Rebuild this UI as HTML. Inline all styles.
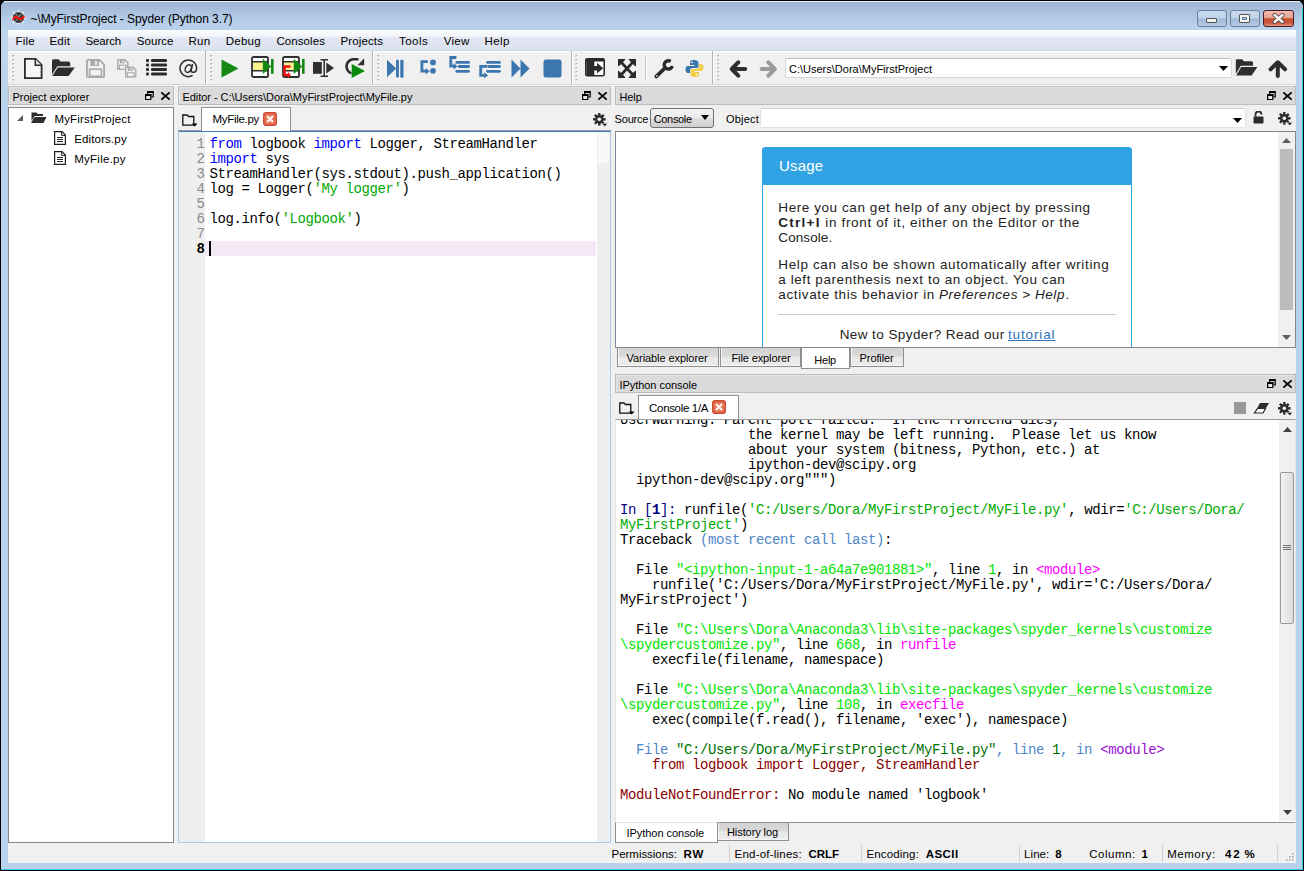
<!DOCTYPE html><html><head><meta charset="utf-8"><style>html,body{margin:0;padding:0;}body{width:1304px;height:871px;overflow:hidden;position:relative;background:#000;font-family:"Liberation Sans",sans-serif;}.a{position:absolute;}.t{position:absolute;white-space:pre;line-height:1;}</style></head><body>
<div class="a" style="left:1px;top:1px;width:1302px;height:869px;background:#b9d1ea;border-radius:6px 6px 0 0;"></div>
<div class="a" style="left:1px;top:1px;width:1302px;height:29px;background:linear-gradient(#9ab3d2,#b3cbe6 60%,#bcd3ec);border-radius:6px 6px 0 0;"></div>
<div class="a" style="left:4px;top:1px;width:1296px;height:1px;background:#eef4fa;"></div>
<div class="a" style="left:1px;top:30px;width:7px;height:90px;background:linear-gradient(#bfd5ec,#b9d1ea);"></div>
<div class="a" style="left:1296px;top:30px;width:7px;height:90px;background:linear-gradient(#bfd5ec,#b9d1ea);"></div>
<div class="a" style="left:1302px;top:8px;width:1px;height:862px;background:#36c8e8;"></div>
<div class="a" style="left:1px;top:869px;width:1302px;height:1px;background:#36c8e8;"></div>
<svg class="a" style="left:10px;top:9px;" width="17" height="17" viewBox="0 0 17 17"><polygon points="8.50,0.50 10.64,3.33 14.16,2.84 13.67,6.36 16.50,8.50 13.67,10.64 14.16,14.16 10.64,13.67 8.50,16.50 6.36,13.67 2.84,14.16 3.33,10.64 0.50,8.50 3.33,6.36 2.84,2.84 6.36,3.33" fill="#eef3f9" opacity="0.85"/><circle cx="8.5" cy="8.5" r="5.6" fill="#3a3a3a"/><path d="M5 4.5 L8.5 8 L12 4.5 M5 12.5 L8.5 9 L12 12.5" stroke="#cfcfcf" stroke-width="0.8" fill="none"/><path d="M3.2 10 Q5.5 6.5 8 9 T13.8 8" stroke="#ff1010" stroke-width="2.2" fill="none" stroke-linecap="round"/></svg>
<div class="t" style="left:30.50px;top:12.84px;font-size:12px;color:#000;letter-spacing:-0.063px;">~\MyFirstProject - Spyder (Python 3.7)</div>
<div class="a" style="left:1197px;top:10px;width:30px;height:17px;box-sizing:border-box;border:1px solid #6d7f96;border-radius:3px;background:linear-gradient(#c9daee,#bfd3ea 45%,#9fb8d6 55%,#b7cde6);"></div>
<div class="a" style="left:1206px;top:18px;width:11px;height:5px;box-sizing:border-box;border:1px solid #555;background:#f4f4f4;border-radius:1px;"></div>
<div class="a" style="left:1230px;top:10px;width:30px;height:17px;box-sizing:border-box;border:1px solid #6d7f96;border-radius:3px;background:linear-gradient(#c9daee,#bfd3ea 45%,#9fb8d6 55%,#b7cde6);"></div>
<div class="a" style="left:1239px;top:14px;width:11px;height:9px;box-sizing:border-box;border:1px solid #555;background:#f4f4f4;border-radius:1px;"></div>
<div class="a" style="left:1242px;top:17px;width:5px;height:3px;box-sizing:border-box;border:1px solid #6d7f96;background:#aac3de;"></div>
<div class="a" style="left:1263px;top:10px;width:31px;height:17px;box-sizing:border-box;border:1px solid #4a1a20;border-radius:3px;background:linear-gradient(#f2bcae,#e3a292 45%,#c9502f 52%,#c8583f 80%,#e49a80);"></div>
<svg class="a" style="left:1272px;top:13px;" width="13" height="11" viewBox="0 0 13 11"><path d="M2.5 2 L10.5 9 M10.5 2 L2.5 9" stroke="#4a3838" stroke-width="4" stroke-linecap="round"/><path d="M2.5 2 L10.5 9 M10.5 2 L2.5 9" stroke="#fafafa" stroke-width="2.4" stroke-linecap="round"/></svg>
<div class="a" style="left:8px;top:30px;width:1288px;height:833px;background:#f0f0f0;"></div>
<div class="a" style="left:8px;top:30px;width:1288px;height:21px;background:linear-gradient(#fcfdfe 0,#f2f4f9 30%,#e3e7f3 36%,#dfe4f1 60%,#dbe1ef 100%);"></div>
<div class="a" style="left:8px;top:50px;width:1288px;height:1px;background:#cdd4e2;"></div>
<div class="t" style="left:15.50px;top:35.87px;font-size:11.5px;color:#000;letter-spacing:0.192px;">File</div>
<div class="t" style="left:49.40px;top:35.87px;font-size:11.5px;color:#000;letter-spacing:0.271px;">Edit</div>
<div class="t" style="left:85.60px;top:35.87px;font-size:11.5px;color:#000;letter-spacing:-0.156px;">Search</div>
<div class="t" style="left:136.70px;top:35.87px;font-size:11.5px;color:#000;letter-spacing:0.077px;">Source</div>
<div class="t" style="left:188.50px;top:35.87px;font-size:11.5px;color:#000;letter-spacing:0.234px;">Run</div>
<div class="t" style="left:225.80px;top:35.87px;font-size:11.5px;color:#000;letter-spacing:0.222px;">Debug</div>
<div class="t" style="left:276.40px;top:35.87px;font-size:11.5px;color:#000;letter-spacing:0.082px;">Consoles</div>
<div class="t" style="left:340.60px;top:35.87px;font-size:11.5px;color:#000;letter-spacing:0.107px;">Projects</div>
<div class="t" style="left:399.00px;top:35.87px;font-size:11.5px;color:#000;letter-spacing:0.451px;">Tools</div>
<div class="t" style="left:443.70px;top:35.87px;font-size:11.5px;color:#000;letter-spacing:0.270px;">View</div>
<div class="t" style="left:484.50px;top:35.87px;font-size:11.5px;color:#000;letter-spacing:0.387px;">Help</div>
<div class="a" style="left:8px;top:51px;width:1288px;height:33px;background:#f0f0f0;"></div>
<div class="a" style="left:8px;top:51px;width:1288px;height:1px;background:#fdfdfd;"></div>
<div class="a" style="left:8px;top:84px;width:1288px;height:1px;background:#d4d4d4;"></div>
<div class="a" style="left:8px;top:85px;width:1288px;height:1px;background:#fbfbfb;"></div>
<div class="a" style="left:205px;top:51px;width:1px;height:33px;background:#b4b4b4;"></div>
<div class="a" style="left:206px;top:51px;width:1px;height:33px;background:#fdfdfd;"></div>
<div class="a" style="left:372px;top:51px;width:1px;height:33px;background:#b4b4b4;"></div>
<div class="a" style="left:373px;top:51px;width:1px;height:33px;background:#fdfdfd;"></div>
<div class="a" style="left:571px;top:51px;width:1px;height:33px;background:#b4b4b4;"></div>
<div class="a" style="left:572px;top:51px;width:1px;height:33px;background:#fdfdfd;"></div>
<div class="a" style="left:712px;top:51px;width:1px;height:33px;background:#b4b4b4;"></div>
<div class="a" style="left:713px;top:51px;width:1px;height:33px;background:#fdfdfd;"></div>
<svg class="a" style="left:11.5px;top:55px;" width="3" height="27" viewBox="0 0 3 27"><rect x="0.5" y="0" width="1.5" height="1.5" fill="#a8a8a8"/><rect x="1.5" y="1.5" width="1" height="1" fill="#fff"/><rect x="0.5" y="4" width="1.5" height="1.5" fill="#a8a8a8"/><rect x="1.5" y="5.5" width="1" height="1" fill="#fff"/><rect x="0.5" y="8" width="1.5" height="1.5" fill="#a8a8a8"/><rect x="1.5" y="9.5" width="1" height="1" fill="#fff"/><rect x="0.5" y="12" width="1.5" height="1.5" fill="#a8a8a8"/><rect x="1.5" y="13.5" width="1" height="1" fill="#fff"/><rect x="0.5" y="16" width="1.5" height="1.5" fill="#a8a8a8"/><rect x="1.5" y="17.5" width="1" height="1" fill="#fff"/><rect x="0.5" y="20" width="1.5" height="1.5" fill="#a8a8a8"/><rect x="1.5" y="21.5" width="1" height="1" fill="#fff"/><rect x="0.5" y="24" width="1.5" height="1.5" fill="#a8a8a8"/><rect x="1.5" y="25.5" width="1" height="1" fill="#fff"/></svg>
<svg class="a" style="left:210px;top:55px;" width="3" height="27" viewBox="0 0 3 27"><rect x="0.5" y="0" width="1.5" height="1.5" fill="#a8a8a8"/><rect x="1.5" y="1.5" width="1" height="1" fill="#fff"/><rect x="0.5" y="4" width="1.5" height="1.5" fill="#a8a8a8"/><rect x="1.5" y="5.5" width="1" height="1" fill="#fff"/><rect x="0.5" y="8" width="1.5" height="1.5" fill="#a8a8a8"/><rect x="1.5" y="9.5" width="1" height="1" fill="#fff"/><rect x="0.5" y="12" width="1.5" height="1.5" fill="#a8a8a8"/><rect x="1.5" y="13.5" width="1" height="1" fill="#fff"/><rect x="0.5" y="16" width="1.5" height="1.5" fill="#a8a8a8"/><rect x="1.5" y="17.5" width="1" height="1" fill="#fff"/><rect x="0.5" y="20" width="1.5" height="1.5" fill="#a8a8a8"/><rect x="1.5" y="21.5" width="1" height="1" fill="#fff"/><rect x="0.5" y="24" width="1.5" height="1.5" fill="#a8a8a8"/><rect x="1.5" y="25.5" width="1" height="1" fill="#fff"/></svg>
<svg class="a" style="left:376.5px;top:55px;" width="3" height="27" viewBox="0 0 3 27"><rect x="0.5" y="0" width="1.5" height="1.5" fill="#a8a8a8"/><rect x="1.5" y="1.5" width="1" height="1" fill="#fff"/><rect x="0.5" y="4" width="1.5" height="1.5" fill="#a8a8a8"/><rect x="1.5" y="5.5" width="1" height="1" fill="#fff"/><rect x="0.5" y="8" width="1.5" height="1.5" fill="#a8a8a8"/><rect x="1.5" y="9.5" width="1" height="1" fill="#fff"/><rect x="0.5" y="12" width="1.5" height="1.5" fill="#a8a8a8"/><rect x="1.5" y="13.5" width="1" height="1" fill="#fff"/><rect x="0.5" y="16" width="1.5" height="1.5" fill="#a8a8a8"/><rect x="1.5" y="17.5" width="1" height="1" fill="#fff"/><rect x="0.5" y="20" width="1.5" height="1.5" fill="#a8a8a8"/><rect x="1.5" y="21.5" width="1" height="1" fill="#fff"/><rect x="0.5" y="24" width="1.5" height="1.5" fill="#a8a8a8"/><rect x="1.5" y="25.5" width="1" height="1" fill="#fff"/></svg>
<svg class="a" style="left:575px;top:55px;" width="3" height="27" viewBox="0 0 3 27"><rect x="0.5" y="0" width="1.5" height="1.5" fill="#a8a8a8"/><rect x="1.5" y="1.5" width="1" height="1" fill="#fff"/><rect x="0.5" y="4" width="1.5" height="1.5" fill="#a8a8a8"/><rect x="1.5" y="5.5" width="1" height="1" fill="#fff"/><rect x="0.5" y="8" width="1.5" height="1.5" fill="#a8a8a8"/><rect x="1.5" y="9.5" width="1" height="1" fill="#fff"/><rect x="0.5" y="12" width="1.5" height="1.5" fill="#a8a8a8"/><rect x="1.5" y="13.5" width="1" height="1" fill="#fff"/><rect x="0.5" y="16" width="1.5" height="1.5" fill="#a8a8a8"/><rect x="1.5" y="17.5" width="1" height="1" fill="#fff"/><rect x="0.5" y="20" width="1.5" height="1.5" fill="#a8a8a8"/><rect x="1.5" y="21.5" width="1" height="1" fill="#fff"/><rect x="0.5" y="24" width="1.5" height="1.5" fill="#a8a8a8"/><rect x="1.5" y="25.5" width="1" height="1" fill="#fff"/></svg>
<svg class="a" style="left:717px;top:55px;" width="3" height="27" viewBox="0 0 3 27"><rect x="0.5" y="0" width="1.5" height="1.5" fill="#a8a8a8"/><rect x="1.5" y="1.5" width="1" height="1" fill="#fff"/><rect x="0.5" y="4" width="1.5" height="1.5" fill="#a8a8a8"/><rect x="1.5" y="5.5" width="1" height="1" fill="#fff"/><rect x="0.5" y="8" width="1.5" height="1.5" fill="#a8a8a8"/><rect x="1.5" y="9.5" width="1" height="1" fill="#fff"/><rect x="0.5" y="12" width="1.5" height="1.5" fill="#a8a8a8"/><rect x="1.5" y="13.5" width="1" height="1" fill="#fff"/><rect x="0.5" y="16" width="1.5" height="1.5" fill="#a8a8a8"/><rect x="1.5" y="17.5" width="1" height="1" fill="#fff"/><rect x="0.5" y="20" width="1.5" height="1.5" fill="#a8a8a8"/><rect x="1.5" y="21.5" width="1" height="1" fill="#fff"/><rect x="0.5" y="24" width="1.5" height="1.5" fill="#a8a8a8"/><rect x="1.5" y="25.5" width="1" height="1" fill="#fff"/></svg>
<svg class="a" style="left:24px;top:58px;" width="19" height="21" viewBox="0 0 19 21"><path d="M0.9 0.9 H11.6 L17.6 6.9 V20.1 H0.9 Z" fill="#f6f6f6" stroke="#2b2b2b" stroke-width="1.8" stroke-linejoin="miter"/><path d="M11.3 1 V7.2 H17.5" fill="#e2e2e2" stroke="#2b2b2b" stroke-width="1.5"/></svg>
<svg class="a" style="left:51px;top:59px;" width="24" height="19" viewBox="0 0 24 19"><path d="M1 1.8 Q1 0.3 2.5 0.3 H7 Q8.5 0.3 9.3 2.6 H17.5 Q19.2 2.6 19.2 4.3 V7.2 H6.3 L1 15.5 Z" fill="#2e2e2e"/><path d="M6.6 8.6 H23.8 L17.6 17 H1.3 Z" fill="#2e2e2e"/></svg>
<svg class="a" style="left:86px;top:59px;" width="19" height="19" viewBox="0 0 19 19"><path d="M1.7 0.9 H13.5 L18.1 5.5 V17.1 Q18.1 18.1 17.1 18.1 H1.9 Q0.9 18.1 0.9 17.1 V1.9 Q0.9 0.9 1.9 0.9 Z" fill="#efefef" stroke="#a9a9a9" stroke-width="1.8"/><rect x="4.5" y="1" width="8.5" height="5.8" fill="#a9a9a9"/><rect x="8.8" y="2" width="2.4" height="3.8" fill="#e8e8e8"/><rect x="3.6" y="10.2" width="11.8" height="7" fill="#f2f2f2" stroke="#a9a9a9" stroke-width="1.6"/></svg>
<svg class="a" style="left:117px;top:59px;" width="20" height="19" viewBox="0 0 20 19"><g><path d="M1.2 0.7 H8 L10.8 3.5 V10.3 H0.7 V1.2 Z" fill="#efefef" stroke="#aaa" stroke-width="1.4"/><rect x="2.8" y="0.8" width="5" height="3.5" fill="#aaa"/><rect x="5.4" y="1.4" width="1.4" height="2.2" fill="#e8e8e8"/><rect x="2.4" y="6.2" width="6.6" height="4" fill="#f2f2f2" stroke="#aaa" stroke-width="1.1"/></g><g transform="translate(8,7.5)"><path d="M1.2 0.7 H8 L10.8 3.5 V10.3 H0.7 V1.2 Z" fill="#efefef" stroke="#aaa" stroke-width="1.4"/><rect x="2.8" y="0.8" width="5" height="3.5" fill="#aaa"/><rect x="5.4" y="1.4" width="1.4" height="2.2" fill="#e8e8e8"/><rect x="2.4" y="6.2" width="6.6" height="4" fill="#f2f2f2" stroke="#aaa" stroke-width="1.1"/></g></svg>
<svg class="a" style="left:146px;top:59px;" width="22" height="17" viewBox="0 0 22 17"><rect x="0" y="0" width="3" height="3" rx="1" fill="#2b2b2b"/><rect x="5" y="0" width="16" height="3" rx="1.2" fill="#2b2b2b"/><rect x="0" y="4.5" width="3" height="3" rx="1" fill="#2b2b2b"/><rect x="5" y="4.5" width="16" height="3" rx="1.2" fill="#2b2b2b"/><rect x="0" y="9" width="3" height="3" rx="1" fill="#2b2b2b"/><rect x="5" y="9" width="16" height="3" rx="1.2" fill="#2b2b2b"/><rect x="0" y="13.5" width="3" height="3" rx="1" fill="#2b2b2b"/><rect x="5" y="13.5" width="16" height="3" rx="1.2" fill="#2b2b2b"/></svg>
<svg class="a" style="left:179px;top:59px;" width="19" height="19" viewBox="0 0 19 19"><ellipse cx="9.3" cy="9.6" rx="2.9" ry="4" transform="rotate(28 9.3 9.6)" fill="none" stroke="#2b2b2b" stroke-width="1.5"/><path d="M13.5 4.8 L12.2 11.4 Q12 13.4 14.4 13.3 Q17.6 13.3 17.6 9 A8.3 8.3 0 1 0 13.6 16.4" fill="none" stroke="#2b2b2b" stroke-width="1.5"/></svg>
<svg class="a" style="left:221px;top:59px;" width="18" height="19" viewBox="0 0 18 19"><path d="M0.5 0.5 L17.5 9.5 L0.5 18.5 Z" fill="#148a14"/></svg>
<svg class="a" style="left:251px;top:56px;" width="24" height="23" viewBox="0 0 24 23"><rect x="1" y="1" width="16" height="20" rx="1.6" fill="#fff" stroke="#2f2f2f" stroke-width="1.8"/><rect x="2" y="6" width="14" height="8.5" fill="#f9f18e"/><path d="M1 5.8 H17 M1 14.7 H17" stroke="#2f2f2f" stroke-width="1.4"/><path d="M11.8 2.8 L20.2 10.4 L11.8 18 Z" fill="#118811"/><rect x="20" y="2.9" width="2.6" height="14.9" fill="#118811"/></svg>
<svg class="a" style="left:282px;top:56px;" width="24" height="23" viewBox="0 0 24 23"><rect x="1" y="1" width="16" height="20" rx="1.6" fill="#fff" stroke="#2f2f2f" stroke-width="1.8"/><rect x="2" y="6" width="14" height="8.5" fill="#f9f18e"/><path d="M1 5.8 H17 M1 14.7 H17" stroke="#2f2f2f" stroke-width="1.4"/><path d="M11.8 2.8 L20.2 10.4 L11.8 18 Z" fill="#118811"/><rect x="20" y="2.9" width="2.6" height="14.9" fill="#118811"/><path d="M8.5 10.5 H2.5 V19 H6.5" stroke="#f01010" stroke-width="2.5" fill="none"/><path d="M6 16 L9 19.2 L6 22 Z" fill="#f01010"/></svg>
<svg class="a" style="left:313px;top:59px;" width="22" height="19" viewBox="0 0 22 19"><rect x="0" y="3" width="8.8" height="11.8" fill="#2f2f2f"/><path d="M7.5 0.8 H15 M11.2 0.8 V17.2 M7.5 17.2 H15" stroke="#2f2f2f" stroke-width="1.5"/><path d="M13.3 3.4 L21 9 L13.3 14.6 Z" fill="#2f2f2f"/></svg>
<svg class="a" style="left:345px;top:58px;" width="21" height="21" viewBox="0 0 21 21"><path d="M13.5 1.3 H9.5 A7.2 7.2 0 0 0 6.5 15.3" stroke="#2f2f2f" stroke-width="2.6" fill="none"/><path d="M12.5 7.2 L19.2 7.2 L19.2 0.3 Z" fill="#2f2f2f"/><path d="M6.7 6 L20 13 L6.7 20 Z" fill="#0a8a0a"/></svg>
<svg class="a" style="left:386px;top:59px;" width="18" height="20" viewBox="0 0 18 20"><path d="M1 0.8 L10.2 9.5 L1 18.2 Z" fill="#3b76ae"/><path d="M11.45 0.2 L12.9 1.6 V17.6 L11.45 19 L10 17.6 V1.6 Z" fill="#3b76ae"/><rect x="14.3" y="0.8" width="3.2" height="18" rx="1" fill="#3b76ae"/></svg>
<svg class="a" style="left:420px;top:59px;" width="17" height="17" viewBox="0 0 17 17"><path d="M7.8 2.6 H1.9 V12.2 H6" stroke="#3b76ae" stroke-width="2.8" fill="none"/><path d="M5.6 9 L9.6 12.2 L5.6 15.4 Z" fill="#3b76ae"/><circle cx="13" cy="3.4" r="2.9" fill="#3b76ae"/><circle cx="13" cy="11.8" r="2.9" fill="#3b76ae"/></svg>
<svg class="a" style="left:449px;top:56px;" width="22" height="18" viewBox="0 0 22 18"><path d="M7.4 1.5 H1.8 V10.2 H5" stroke="#3b76ae" stroke-width="2.8" fill="none"/><path d="M4.8 7 L8.4 10.2 L4.8 13.4 Z" fill="#3b76ae"/><rect x="6.4" y="5" width="14.6" height="2.8" rx="1.4" fill="#3b76ae"/><rect x="8.6" y="9.1" width="12.4" height="2.8" rx="1.4" fill="#3b76ae"/><rect x="6.4" y="13.9" width="14.6" height="2.8" rx="1.4" fill="#3b76ae"/></svg>
<svg class="a" style="left:479px;top:61px;" width="23" height="18" viewBox="0 0 23 18"><rect x="7.1" y="0" width="14.8" height="2.8" rx="1.4" fill="#3b76ae"/><rect x="8.6" y="4.1" width="13.3" height="2.8" rx="1.4" fill="#3b76ae"/><rect x="7.1" y="8.9" width="14.8" height="2.8" rx="1.4" fill="#3b76ae"/><path d="M8.4 5.4 H1.7 V14.4 H5.5" stroke="#3b76ae" stroke-width="2.8" fill="none"/><path d="M5.2 11.2 L9 14.4 L5.2 17.6 Z" fill="#3b76ae"/></svg>
<svg class="a" style="left:511px;top:59px;" width="20" height="19" viewBox="0 0 20 19"><path d="M0.5 0.5 L9.5 9.5 L0.5 18.5 Z M9.5 0.5 L18.5 9.5 L9.5 18.5 Z" fill="#3b76ae"/></svg>
<svg class="a" style="left:543px;top:59px;" width="19" height="19" viewBox="0 0 19 19"><rect x="0.5" y="0.5" width="18" height="18" rx="2.5" fill="#3b76ae"/></svg>
<svg class="a" style="left:585px;top:58px;" width="20" height="19" viewBox="0 0 20 19"><rect x="0.8" y="0.8" width="18.4" height="17" rx="1.6" fill="#fff" stroke="#2b2b2b" stroke-width="1.6"/><rect x="0.5" y="0.5" width="19" height="3" rx="1" fill="#2b2b2b"/><rect x="1.5" y="3" width="7.8" height="14" fill="#2b2b2b"/><rect x="8" y="8" width="5" height="4.5" fill="#2b2b2b"/><path d="M12 4.8 L18.2 10.2 L12 15.6 Z" fill="#2b2b2b"/></svg>
<svg class="a" style="left:618px;top:59px;" width="18" height="19" viewBox="0 0 18 19"><path d="M2.5 2.5 L15.5 16.5 M15.5 2.5 L2.5 16.5" stroke="#2b2b2b" stroke-width="2.7"/><path d="M0.6 0.6 H6.6 L4.4 2.9 L2.9 4.4 L0.6 6.6 Z" fill="#2b2b2b" stroke="#2b2b2b" stroke-width="1.2" stroke-linejoin="round"/><g transform="translate(18,0) scale(-1,1)"><path d="M0.6 0.6 H6.6 L4.4 2.9 L2.9 4.4 L0.6 6.6 Z" fill="#2b2b2b" stroke="#2b2b2b" stroke-width="1.2" stroke-linejoin="round"/></g><g transform="translate(0,19) scale(1,-1)"><path d="M0.6 0.6 H6.6 L4.4 2.9 L2.9 4.4 L0.6 6.6 Z" fill="#2b2b2b" stroke="#2b2b2b" stroke-width="1.2" stroke-linejoin="round"/></g><g transform="translate(18,19) scale(-1,-1)"><path d="M0.6 0.6 H6.6 L4.4 2.9 L2.9 4.4 L0.6 6.6 Z" fill="#2b2b2b" stroke="#2b2b2b" stroke-width="1.2" stroke-linejoin="round"/></g></svg>
<div class="a" style="left:645px;top:56px;width:1px;height:24px;background:#c9c9c9;"></div>
<div class="a" style="left:646px;top:56px;width:1px;height:24px;background:#fdfdfd;"></div>
<svg class="a" style="left:654px;top:59px;" width="20" height="20" viewBox="0 0 20 20"><path d="M2.4 17.4 L11 9" stroke="#2b2b2b" stroke-width="3.8" stroke-linecap="round"/><circle cx="2.9" cy="16.9" r="0.8" fill="#f0f0f0"/><path d="M16.6 2.5 A4.1 4.1 0 1 0 18.3 7.1" stroke="#2b2b2b" stroke-width="3.4" fill="none"/></svg>
<svg class="a" style="left:685px;top:59px;" width="19" height="19" viewBox="0 0 19 19"><path d="M9 1 C5 1 5 2.5 5 4 V6 H9.5 V7 H3 C1 7 0.5 9 0.5 10.5 C0.5 12 1 14 3 14 H5 V11.5 C5 10 6 9 7.5 9 H11.5 C13 9 13.5 8 13.5 6.5 V4 C13.5 2 12 1 9 1 Z" fill="#3b77a8"/><path d="M10 18 C14 18 14 16.5 14 15 V13 H9.5 V12 H16 C18 12 18.5 10 18.5 8.5 C18.5 7 18 5 16 5 H14 V7.5 C14 9 13 10 11.5 10 H7.5 C6 10 5.5 11 5.5 12.5 V15 C5.5 17 7 18 10 18 Z" fill="#f2cd4a"/><circle cx="7" cy="3.3" r="0.9" fill="#fff"/><circle cx="12" cy="15.7" r="0.9" fill="#fff"/></svg>
<svg class="a" style="left:729px;top:60px;" width="20" height="18" viewBox="0 0 20 18"><path d="M9.2 2.3 L2.8 9 L9.2 15.7 M3.5 9 H16.2" stroke="#2e2e2e" stroke-width="4" fill="none" stroke-linecap="round" stroke-linejoin="round"/></svg>
<svg class="a" style="left:759px;top:60px;" width="20" height="18" viewBox="0 0 20 18"><path d="M9.4 2.3 L15.8 9 L9.4 15.7 M15 9 H2.6" stroke="#9a9a9a" stroke-width="4" fill="none" stroke-linecap="round" stroke-linejoin="round"/></svg>
<svg class="a" style="left:1235px;top:59px;" width="23" height="18" viewBox="0 0 23 18"><path d="M0.8 1.5 Q0.8 0.2 2.2 0.2 H6.5 Q7.9 0.2 8.7 2.3 H16.5 Q18 2.3 18 3.8 V6.8 H5.8 L0.8 14.8 Z" fill="#2e2e2e"/><path d="M6.2 8.1 H22.4 L16.6 16.6 H1.1 Z" fill="#2e2e2e"/></svg>
<svg class="a" style="left:1268px;top:60px;" width="20" height="18" viewBox="0 0 20 18"><path d="M2.6 9.3 L9.8 2.3 L17 9.3 M9.8 3 V16" stroke="#2e2e2e" stroke-width="4" fill="none" stroke-linecap="round" stroke-linejoin="round"/></svg>
<div class="a" style="left:785px;top:58px;width:447px;height:20px;box-sizing:border-box;border:1px solid #d6d6d6;border-top-color:#c2c2c2;background:#fff;border-radius:2px;"></div>
<div class="t" style="left:789.00px;top:63.69px;font-size:11px;color:#000;letter-spacing:-0.001px;">C:\Users\Dora\MyFirstProject</div>
<svg class="a" style="left:1219px;top:66px;" width="9" height="5" viewBox="0 0 9 5"><path d="M0 0 H9 L4.5 5 Z" fill="#000"/></svg>
<div class="a" style="left:8px;top:86px;width:166px;height:19px;box-sizing:border-box;border:1px solid #bcbcbc;background:#dadada;box-shadow:inset 1px 1px 0 #e4e4e4;"></div>
<div class="t" style="left:12.40px;top:91.69px;font-size:11px;color:#000;letter-spacing:-0.002px;">Project explorer</div>
<svg class="a" style="left:145px;top:91px;" width="9" height="9" viewBox="0 0 9 9"><path d="M2.6 0.8 H8.2 V6 H5.5 M2.6 0.8 V3" stroke="#000" stroke-width="1.2" fill="none"/><rect x="2" y="0" width="6.6" height="2" fill="#000"/><rect x="0.6" y="3.6" width="5.2" height="5" fill="#e6e6e6" stroke="#000" stroke-width="1.2"/><rect x="0" y="3" width="6.4" height="2" fill="#000"/></svg>
<svg class="a" style="left:161px;top:92px;" width="9" height="8" viewBox="0 0 9 8"><path d="M0.9 0.9 L8.1 7.1 M8.1 0.9 L0.9 7.1" stroke="#000" stroke-width="1.8" stroke-linecap="square"/></svg>
<div class="a" style="left:8px;top:107px;width:166px;height:736px;box-sizing:border-box;border:1px solid #828790;background:#fff;"></div>
<svg class="a" style="left:17px;top:115px;" width="6" height="6" viewBox="0 0 6 6"><path d="M6 0 V6 H0 Z" fill="#5a5a5a"/></svg>
<svg class="a" style="left:31px;top:112px;" width="16" height="11" viewBox="0 0 16 11"><path d="M0.5 0.5 H5.5 L7 2 H12 V4 H3.5 L0.5 9 Z" fill="#2e2e2e"/><path d="M3.5 5 H15.5 L12.5 11 H0 Z" fill="#2e2e2e"/></svg>
<div class="t" style="left:54.40px;top:113.77px;font-size:11.5px;color:#000;letter-spacing:0.194px;">MyFirstProject</div>
<svg class="a" style="left:54px;top:131px;" width="13" height="15" viewBox="0 0 13 15"><path d="M0.6 0.6 H8 L11.4 4 V13.4 H0.6 Z" fill="#fff" stroke="#222" stroke-width="1.2"/><path d="M7.6 0.8 V4.4 H11.2" fill="none" stroke="#222" stroke-width="1"/><path d="M3 6.5 H9 M3 8.5 H9 M3 10.5 H9" stroke="#222" stroke-width="1"/></svg>
<div class="t" style="left:74.20px;top:133.87px;font-size:11.5px;color:#000;letter-spacing:0.147px;">Editors.py</div>
<svg class="a" style="left:54px;top:151px;" width="13" height="15" viewBox="0 0 13 15"><path d="M0.6 0.6 H8 L11.4 4 V13.4 H0.6 Z" fill="#fff" stroke="#222" stroke-width="1.2"/><path d="M7.6 0.8 V4.4 H11.2" fill="none" stroke="#222" stroke-width="1"/><path d="M3 6.5 H9 M3 8.5 H9 M3 10.5 H9" stroke="#222" stroke-width="1"/></svg>
<div class="t" style="left:74.20px;top:153.87px;font-size:11.5px;color:#000;letter-spacing:0.266px;">MyFile.py</div>
<div class="a" style="left:178px;top:86px;width:433px;height:19px;box-sizing:border-box;border:1px solid #bcbcbc;background:#dadada;box-shadow:inset 1px 1px 0 #e4e4e4;"></div>
<div class="t" style="left:182.40px;top:91.69px;font-size:11px;color:#000;letter-spacing:-0.035px;">Editor - C:\Users\Dora\MyFirstProject\MyFile.py</div>
<svg class="a" style="left:582px;top:91px;" width="9" height="9" viewBox="0 0 9 9"><path d="M2.6 0.8 H8.2 V6 H5.5 M2.6 0.8 V3" stroke="#000" stroke-width="1.2" fill="none"/><rect x="2" y="0" width="6.6" height="2" fill="#000"/><rect x="0.6" y="3.6" width="5.2" height="5" fill="#e6e6e6" stroke="#000" stroke-width="1.2"/><rect x="0" y="3" width="6.4" height="2" fill="#000"/></svg>
<svg class="a" style="left:598px;top:92px;" width="9" height="8" viewBox="0 0 9 8"><path d="M0.9 0.9 L8.1 7.1 M8.1 0.9 L0.9 7.1" stroke="#000" stroke-width="1.8" stroke-linecap="square"/></svg>
<svg class="a" style="left:182px;top:114px;" width="16" height="13" viewBox="0 0 16 13"><path d="M0.8 1 H5 L6.5 2.5 H11.8 V11.2 H0.8 Z" fill="none" stroke="#111" stroke-width="1.3"/><path d="M10 9.5 H15.5 L12.75 12.5 Z" fill="#000"/></svg>
<div class="a" style="left:201px;top:107px;width:90px;height:25px;box-sizing:border-box;border:1px solid #8e8f8f;border-bottom:none;background:#fff;"></div>
<div class="t" style="left:212.40px;top:113.77px;font-size:11.5px;color:#000;letter-spacing:-0.289px;">MyFile.py</div>
<svg class="a" style="left:263px;top:112px;" width="14" height="14" viewBox="0 0 14 14"><rect x="0.7" y="0.7" width="12.6" height="12.6" rx="2.2" fill="#e47356" stroke="#cf4a2c" stroke-width="1.4"/><path d="M4 4 L10 10 M10 4 L4 10" stroke="#fff4ee" stroke-width="2.3"/></svg>
<svg class="a" style="left:593px;top:113px;" width="15" height="15" viewBox="0 0 15 15"><circle cx="6.3" cy="6.3" r="4.3" fill="#2b2b2b"/><rect x="-1.2" y="-6.3" width="2.4" height="2.6" fill="#2b2b2b" transform="translate(6.3,6.3) rotate(0)"/><rect x="-1.2" y="-6.3" width="2.4" height="2.6" fill="#2b2b2b" transform="translate(6.3,6.3) rotate(45)"/><rect x="-1.2" y="-6.3" width="2.4" height="2.6" fill="#2b2b2b" transform="translate(6.3,6.3) rotate(90)"/><rect x="-1.2" y="-6.3" width="2.4" height="2.6" fill="#2b2b2b" transform="translate(6.3,6.3) rotate(135)"/><rect x="-1.2" y="-6.3" width="2.4" height="2.6" fill="#2b2b2b" transform="translate(6.3,6.3) rotate(180)"/><rect x="-1.2" y="-6.3" width="2.4" height="2.6" fill="#2b2b2b" transform="translate(6.3,6.3) rotate(225)"/><rect x="-1.2" y="-6.3" width="2.4" height="2.6" fill="#2b2b2b" transform="translate(6.3,6.3) rotate(270)"/><rect x="-1.2" y="-6.3" width="2.4" height="2.6" fill="#2b2b2b" transform="translate(6.3,6.3) rotate(315)"/><circle cx="6.3" cy="6.3" r="1.8" fill="#f4f4f4"/><path d="M9.2 10.6 H14.4 L11.8 13.4 Z" fill="#000" stroke="#f0f0f0" stroke-width="0.5"/></svg>
<div class="a" style="left:178px;top:131px;width:433px;height:712px;box-sizing:border-box;border:1px solid #a9c9e6;border-top:1px solid #3f7fbf;background:#fff;"></div>
<div class="a" style="left:179px;top:132px;width:26px;height:710px;background:#efefef;"></div>
<div class="a" style="left:178px;top:130px;width:23px;height:1px;background:#9a9a9a;"></div>
<div class="a" style="left:291px;top:130px;width:320px;height:1px;background:#9a9a9a;"></div>
<div class="a" style="left:597px;top:132px;width:13px;height:710px;background:#efefef;"></div>
<div class="a" style="left:598px;top:133px;width:11px;height:30px;background:#f9f9f9;"></div>
<div class="a" style="left:205px;top:241px;width:391px;height:15px;background:#f5e9f6;"></div>
<div class="t" style="left:196.5px;top:137.27px;font-size:14px;font-family:'Liberation Mono',monospace;letter-spacing:-0.4px;"><span style="color:#8a8a8a;">1</span></div>
<div class="t" style="left:209.5px;top:136.77px;font-size:14px;font-family:'Liberation Mono',monospace;letter-spacing:-0.4px;"><span style="color:#0000ff;">from</span><span style="color:#000;"> logbook </span><span style="color:#0000ff;">import</span><span style="color:#000;"> Logger, StreamHandler</span></div>
<div class="t" style="left:196.5px;top:152.27px;font-size:14px;font-family:'Liberation Mono',monospace;letter-spacing:-0.4px;"><span style="color:#8a8a8a;">2</span></div>
<div class="t" style="left:209.5px;top:151.77px;font-size:14px;font-family:'Liberation Mono',monospace;letter-spacing:-0.4px;"><span style="color:#0000ff;">import</span><span style="color:#000;"> sys</span></div>
<div class="t" style="left:196.5px;top:167.27px;font-size:14px;font-family:'Liberation Mono',monospace;letter-spacing:-0.4px;"><span style="color:#8a8a8a;">3</span></div>
<div class="t" style="left:209.5px;top:166.77px;font-size:14px;font-family:'Liberation Mono',monospace;letter-spacing:-0.4px;"><span style="color:#000;">StreamHandler(sys.stdout).push_application()</span></div>
<div class="t" style="left:196.5px;top:182.27px;font-size:14px;font-family:'Liberation Mono',monospace;letter-spacing:-0.4px;"><span style="color:#8a8a8a;">4</span></div>
<div class="t" style="left:209.5px;top:181.77px;font-size:14px;font-family:'Liberation Mono',monospace;letter-spacing:-0.4px;"><span style="color:#000;">log = Logger(</span><span style="color:#00aa00;">&#x27;My logger&#x27;</span><span style="color:#000;">)</span></div>
<div class="t" style="left:196.5px;top:197.27px;font-size:14px;font-family:'Liberation Mono',monospace;letter-spacing:-0.4px;"><span style="color:#8a8a8a;">5</span></div>
<div class="t" style="left:196.5px;top:212.27px;font-size:14px;font-family:'Liberation Mono',monospace;letter-spacing:-0.4px;"><span style="color:#8a8a8a;">6</span></div>
<div class="t" style="left:209.5px;top:211.77px;font-size:14px;font-family:'Liberation Mono',monospace;letter-spacing:-0.4px;"><span style="color:#000;">log.info(</span><span style="color:#00aa00;">&#x27;Logbook&#x27;</span><span style="color:#000;">)</span></div>
<div class="t" style="left:196.5px;top:227.27px;font-size:14px;font-family:'Liberation Mono',monospace;letter-spacing:-0.4px;"><span style="color:#8a8a8a;">7</span></div>
<div class="t" style="left:196.5px;top:242.27px;font-size:14px;font-family:'Liberation Mono',monospace;letter-spacing:-0.4px;"><span style="color:#000;font-weight:bold;">8</span></div>
<div class="a" style="left:209px;top:241px;width:2px;height:15px;background:#000;"></div>
<div class="a" style="left:615px;top:86px;width:681px;height:19px;box-sizing:border-box;border:1px solid #bcbcbc;background:#dadada;box-shadow:inset 1px 1px 0 #e4e4e4;"></div>
<div class="t" style="left:619.40px;top:91.69px;font-size:11px;color:#000;letter-spacing:-0.081px;">Help</div>
<svg class="a" style="left:1267px;top:91px;" width="9" height="9" viewBox="0 0 9 9"><path d="M2.6 0.8 H8.2 V6 H5.5 M2.6 0.8 V3" stroke="#000" stroke-width="1.2" fill="none"/><rect x="2" y="0" width="6.6" height="2" fill="#000"/><rect x="0.6" y="3.6" width="5.2" height="5" fill="#e6e6e6" stroke="#000" stroke-width="1.2"/><rect x="0" y="3" width="6.4" height="2" fill="#000"/></svg>
<svg class="a" style="left:1283px;top:92px;" width="9" height="8" viewBox="0 0 9 8"><path d="M0.9 0.9 L8.1 7.1 M8.1 0.9 L0.9 7.1" stroke="#000" stroke-width="1.8" stroke-linecap="square"/></svg>
<div class="t" style="left:614.60px;top:113.89px;font-size:11px;color:#000;letter-spacing:-0.209px;">Source</div>
<div class="a" style="left:650px;top:108px;width:64px;height:20px;box-sizing:border-box;border:1px solid #707070;border-radius:3px;background:linear-gradient(#f2f2f2,#ebebeb 50%,#dddddd 51%,#cfcfcf);"></div>
<div class="t" style="left:653.70px;top:113.89px;font-size:11px;color:#000;letter-spacing:-0.323px;">Console</div>
<svg class="a" style="left:701px;top:115px;" width="8" height="5" viewBox="0 0 8 5"><path d="M0 0 H8 L4 5 Z" fill="#000"/></svg>
<div class="t" style="left:726.00px;top:113.89px;font-size:11px;color:#000;letter-spacing:0.201px;">Object</div>
<div class="a" style="left:760px;top:108px;width:486px;height:20px;box-sizing:border-box;border:1px solid #e3e3e3;border-top-color:#cfcfcf;background:#fff;border-radius:2px;"></div>
<svg class="a" style="left:1233px;top:118px;" width="9" height="5" viewBox="0 0 9 5"><path d="M0 0 H9 L4.5 5 Z" fill="#000"/></svg>
<svg class="a" style="left:1253px;top:111px;" width="11" height="13" viewBox="0 0 11 13"><rect x="0.5" y="5.5" width="10" height="7" rx="1" fill="#2b2b2b"/><path d="M2.5 5.5 V3.5 A3 3 0 0 1 8.5 3.5" stroke="#2b2b2b" stroke-width="1.8" fill="none"/></svg>
<svg class="a" style="left:1278px;top:112px;" width="15" height="15" viewBox="0 0 15 15"><circle cx="6.3" cy="6.3" r="4.3" fill="#2b2b2b"/><rect x="-1.2" y="-6.3" width="2.4" height="2.6" fill="#2b2b2b" transform="translate(6.3,6.3) rotate(0)"/><rect x="-1.2" y="-6.3" width="2.4" height="2.6" fill="#2b2b2b" transform="translate(6.3,6.3) rotate(45)"/><rect x="-1.2" y="-6.3" width="2.4" height="2.6" fill="#2b2b2b" transform="translate(6.3,6.3) rotate(90)"/><rect x="-1.2" y="-6.3" width="2.4" height="2.6" fill="#2b2b2b" transform="translate(6.3,6.3) rotate(135)"/><rect x="-1.2" y="-6.3" width="2.4" height="2.6" fill="#2b2b2b" transform="translate(6.3,6.3) rotate(180)"/><rect x="-1.2" y="-6.3" width="2.4" height="2.6" fill="#2b2b2b" transform="translate(6.3,6.3) rotate(225)"/><rect x="-1.2" y="-6.3" width="2.4" height="2.6" fill="#2b2b2b" transform="translate(6.3,6.3) rotate(270)"/><rect x="-1.2" y="-6.3" width="2.4" height="2.6" fill="#2b2b2b" transform="translate(6.3,6.3) rotate(315)"/><circle cx="6.3" cy="6.3" r="1.8" fill="#f4f4f4"/><path d="M9.2 10.6 H14.4 L11.8 13.4 Z" fill="#000" stroke="#f0f0f0" stroke-width="0.5"/></svg>
<div class="a" style="left:615px;top:131px;width:681px;height:217px;box-sizing:border-box;border:1px solid #828790;background:#fff;"></div>
<div class="a" style="left:762px;top:147px;width:370px;height:200px;box-sizing:border-box;border:1px solid #31a3e4;border-bottom:none;border-radius:4px 4px 0 0;background:#fff;"></div>
<div class="a" style="left:762px;top:147px;width:370px;height:38px;background:#31a3e4;border-radius:4px 4px 0 0;"></div>
<div class="t" style="left:779.00px;top:158.40px;font-size:15px;color:#fff;letter-spacing:0.208px;">Usage</div>
<div class="t" style="left:778.30px;top:200.87px;font-size:13.5px;color:#222;letter-spacing:0.579px;">Here you can get help of any object by pressing</div>
<div class="t" style="left:778.30px;top:215.87px;font-size:13.5px;color:#222;font-weight:bold;letter-spacing:1.253px;">Ctrl+I</div>
<div class="t" style="left:825.30px;top:215.87px;font-size:13.5px;color:#222;letter-spacing:0.653px;">in front of it, either on the Editor or the</div>
<div class="t" style="left:778.30px;top:230.87px;font-size:13.5px;color:#222;letter-spacing:0.090px;">Console.</div>
<div class="t" style="left:778.30px;top:257.57px;font-size:13.5px;color:#222;letter-spacing:0.632px;">Help can also be shown automatically after writing</div>
<div class="t" style="left:778.30px;top:272.57px;font-size:13.5px;color:#222;letter-spacing:0.574px;">a left parenthesis next to an object. You can</div>
<div class="t" style="left:778.30px;top:287.57px;font-size:13.5px;color:#222;letter-spacing:0.622px;">activate this behavior in </div>
<div class="t" style="left:939.00px;top:287.57px;font-size:13.5px;color:#222;font-style:italic;letter-spacing:0.559px;">Preferences &gt; Help</div>
<div class="t" style="left:1065.50px;top:287.57px;font-size:13.5px;color:#222;">.</div>
<div class="a" style="left:778px;top:314px;width:338px;height:1px;background:#c8c8c8;"></div>
<div class="t" style="left:839.70px;top:327.57px;font-size:13.5px;color:#222;letter-spacing:0.420px;">New to Spyder? Read our</div>
<div class="t" style="left:1008.00px;top:327.57px;font-size:13.5px;color:#2e73b8;letter-spacing:0.860px;text-decoration:underline;">tutorial</div>
<div class="a" style="left:1278px;top:132px;width:17px;height:215px;background:#f0f0f0;"></div>
<div class="a" style="left:1280px;top:149px;width:13px;height:161px;background:#bcbcbc;"></div>
<svg class="a" style="left:1282px;top:138px;" width="9" height="5" viewBox="0 0 9 5"><path d="M0 5 H9 L4.5 0 Z" fill="#606060"/></svg>
<svg class="a" style="left:1282px;top:335px;" width="9" height="5" viewBox="0 0 9 5"><path d="M0 0 H9 L4.5 5 Z" fill="#606060"/></svg>
<div class="a" style="left:617px;top:348px;width:102px;height:19px;box-sizing:border-box;border:1px solid #8e8f8f;border-top:none;background:linear-gradient(#d4d4d4 0,#d8d8d8 45%,#e9e9e9 52%,#ececec 100%);box-shadow:inset 1px -1px 0 #f8f8f8;"></div>
<div class="t" style="left:626.60px;top:352.99px;font-size:11px;color:#000;letter-spacing:-0.079px;">Variable explorer</div>
<div class="a" style="left:720px;top:348px;width:81px;height:19px;box-sizing:border-box;border:1px solid #8e8f8f;border-top:none;background:linear-gradient(#d4d4d4 0,#d8d8d8 45%,#e9e9e9 52%,#ececec 100%);box-shadow:inset 1px -1px 0 #f8f8f8;"></div>
<div class="t" style="left:731.50px;top:352.99px;font-size:11px;color:#000;letter-spacing:-0.117px;">File explorer</div>
<div class="a" style="left:850px;top:348px;width:54px;height:19px;box-sizing:border-box;border:1px solid #8e8f8f;border-top:none;background:linear-gradient(#d4d4d4 0,#d8d8d8 45%,#e9e9e9 52%,#ececec 100%);box-shadow:inset 1px -1px 0 #f8f8f8;"></div>
<div class="t" style="left:859.60px;top:352.99px;font-size:11px;color:#000;letter-spacing:-0.106px;">Profiler</div>
<div class="a" style="left:801px;top:348px;width:49px;height:21px;box-sizing:border-box;border:1px solid #8e8f8f;border-top:none;background:#fff;"></div>
<div class="t" style="left:814.30px;top:354.69px;font-size:11px;color:#000;letter-spacing:-0.231px;">Help</div>
<div class="a" style="left:615px;top:374px;width:681px;height:19px;box-sizing:border-box;border:1px solid #bcbcbc;background:#dadada;box-shadow:inset 1px 1px 0 #e4e4e4;"></div>
<div class="t" style="left:619.40px;top:379.69px;font-size:11px;color:#000;letter-spacing:-0.038px;">IPython console</div>
<svg class="a" style="left:1267px;top:379px;" width="9" height="9" viewBox="0 0 9 9"><path d="M2.6 0.8 H8.2 V6 H5.5 M2.6 0.8 V3" stroke="#000" stroke-width="1.2" fill="none"/><rect x="2" y="0" width="6.6" height="2" fill="#000"/><rect x="0.6" y="3.6" width="5.2" height="5" fill="#e6e6e6" stroke="#000" stroke-width="1.2"/><rect x="0" y="3" width="6.4" height="2" fill="#000"/></svg>
<svg class="a" style="left:1283px;top:380px;" width="9" height="8" viewBox="0 0 9 8"><path d="M0.9 0.9 L8.1 7.1 M8.1 0.9 L0.9 7.1" stroke="#000" stroke-width="1.8" stroke-linecap="square"/></svg>
<svg class="a" style="left:619px;top:402px;" width="16" height="13" viewBox="0 0 16 13"><path d="M0.8 1 H5 L6.5 2.5 H11.8 V11.2 H0.8 Z" fill="none" stroke="#111" stroke-width="1.3"/><path d="M10 9.5 H15.5 L12.75 12.5 Z" fill="#000"/></svg>
<div class="a" style="left:638px;top:395px;width:101px;height:25px;box-sizing:border-box;border:1px solid #8e8f8f;border-bottom:none;background:#fff;"></div>
<div class="t" style="left:649.10px;top:402.57px;font-size:11.5px;color:#000;letter-spacing:-0.332px;">Console 1/A</div>
<svg class="a" style="left:712px;top:400px;" width="14" height="14" viewBox="0 0 14 14"><rect x="0.7" y="0.7" width="12.6" height="12.6" rx="2.2" fill="#e47356" stroke="#cf4a2c" stroke-width="1.4"/><path d="M4 4 L10 10 M10 4 L4 10" stroke="#fff4ee" stroke-width="2.3"/></svg>
<div class="a" style="left:1234px;top:402px;width:12px;height:12px;background:#999;"></div>
<svg class="a" style="left:1253px;top:402px;" width="17" height="12" viewBox="0 0 17 12"><path d="M7 1 H16 L10 11 H1.5 Z" fill="#2b2b2b"/><path d="M4.5 6.5 H12.5 L10 11 H1.5 Z" fill="#fff" stroke="#2b2b2b" stroke-width="1.2"/></svg>
<svg class="a" style="left:1278px;top:402px;" width="15" height="15" viewBox="0 0 15 15"><circle cx="6.3" cy="6.3" r="4.3" fill="#2b2b2b"/><rect x="-1.2" y="-6.3" width="2.4" height="2.6" fill="#2b2b2b" transform="translate(6.3,6.3) rotate(0)"/><rect x="-1.2" y="-6.3" width="2.4" height="2.6" fill="#2b2b2b" transform="translate(6.3,6.3) rotate(45)"/><rect x="-1.2" y="-6.3" width="2.4" height="2.6" fill="#2b2b2b" transform="translate(6.3,6.3) rotate(90)"/><rect x="-1.2" y="-6.3" width="2.4" height="2.6" fill="#2b2b2b" transform="translate(6.3,6.3) rotate(135)"/><rect x="-1.2" y="-6.3" width="2.4" height="2.6" fill="#2b2b2b" transform="translate(6.3,6.3) rotate(180)"/><rect x="-1.2" y="-6.3" width="2.4" height="2.6" fill="#2b2b2b" transform="translate(6.3,6.3) rotate(225)"/><rect x="-1.2" y="-6.3" width="2.4" height="2.6" fill="#2b2b2b" transform="translate(6.3,6.3) rotate(270)"/><rect x="-1.2" y="-6.3" width="2.4" height="2.6" fill="#2b2b2b" transform="translate(6.3,6.3) rotate(315)"/><circle cx="6.3" cy="6.3" r="1.8" fill="#f4f4f4"/><path d="M9.2 10.6 H14.4 L11.8 13.4 Z" fill="#000" stroke="#f0f0f0" stroke-width="0.5"/></svg>
<div class="a" style="left:615px;top:419px;width:681px;height:404px;box-sizing:border-box;border:1px solid #e6e6e6;border-top:1px solid #9c9c9c;border-bottom:1px solid #8e8f8f;background:#fff;"></div>
<div class="a" style="left:616px;top:420px;width:663px;height:401px;overflow:hidden;">
<div class="t" style="left:4px;top:-6.73px;font-size:14px;font-family:'Liberation Mono',monospace;letter-spacing:-0.4px;"><span style="color:#000;">UserWarning: Parent poll failed.  If the frontend dies,</span></div>
<div class="t" style="left:4px;top:8.27px;font-size:14px;font-family:'Liberation Mono',monospace;letter-spacing:-0.4px;"><span style="color:#000;">                the kernel may be left running.  Please let us know</span></div>
<div class="t" style="left:4px;top:23.27px;font-size:14px;font-family:'Liberation Mono',monospace;letter-spacing:-0.4px;"><span style="color:#000;">                about your system (bitness, Python, etc.) at</span></div>
<div class="t" style="left:4px;top:38.27px;font-size:14px;font-family:'Liberation Mono',monospace;letter-spacing:-0.4px;"><span style="color:#000;">                ipython-dev@scipy.org</span></div>
<div class="t" style="left:4px;top:53.27px;font-size:14px;font-family:'Liberation Mono',monospace;letter-spacing:-0.4px;"><span style="color:#000;">  ipython-dev@scipy.org&quot;&quot;&quot;)</span></div>
<div class="t" style="left:4px;top:83.27px;font-size:14px;font-family:'Liberation Mono',monospace;letter-spacing:-0.4px;"><span style="color:#000080;">In [</span><span style="color:#000080;font-weight:bold;">1</span><span style="color:#000080;">]: </span><span style="color:#000;">runfile(</span><span style="color:#00aa00;">&#x27;C:/Users/Dora/MyFirstProject/MyFile.py&#x27;</span><span style="color:#000;">, wdir=</span><span style="color:#00aa00;">&#x27;C:/Users/Dora/</span></div>
<div class="t" style="left:4px;top:98.27px;font-size:14px;font-family:'Liberation Mono',monospace;letter-spacing:-0.4px;"><span style="color:#00aa00;">MyFirstProject&#x27;</span><span style="color:#000;">)</span></div>
<div class="t" style="left:4px;top:113.27px;font-size:14px;font-family:'Liberation Mono',monospace;letter-spacing:-0.4px;"><span style="color:#000;">Traceback </span><span style="color:#4f86c6;">(most recent call last)</span><span style="color:#000;">:</span></div>
<div class="t" style="left:4px;top:143.27px;font-size:14px;font-family:'Liberation Mono',monospace;letter-spacing:-0.4px;"><span style="color:#000;">  File </span><span style="color:#00e600;">&quot;&lt;ipython-input-1-a64a7e901881&gt;&quot;</span><span style="color:#000;">, line </span><span style="color:#00e600;">1</span><span style="color:#000;">, in </span><span style="color:#ff00ff;">&lt;module&gt;</span></div>
<div class="t" style="left:4px;top:158.27px;font-size:14px;font-family:'Liberation Mono',monospace;letter-spacing:-0.4px;"><span style="color:#000;">    runfile(&#x27;C:/Users/Dora/MyFirstProject/MyFile.py&#x27;, wdir=&#x27;C:/Users/Dora/</span></div>
<div class="t" style="left:4px;top:173.27px;font-size:14px;font-family:'Liberation Mono',monospace;letter-spacing:-0.4px;"><span style="color:#000;">MyFirstProject&#x27;)</span></div>
<div class="t" style="left:4px;top:203.27px;font-size:14px;font-family:'Liberation Mono',monospace;letter-spacing:-0.4px;"><span style="color:#000;">  File </span><span style="color:#00e600;">&quot;C:\Users\Dora\Anaconda3\lib\site-packages\spyder_kernels\customize</span></div>
<div class="t" style="left:4px;top:218.27px;font-size:14px;font-family:'Liberation Mono',monospace;letter-spacing:-0.4px;"><span style="color:#00e600;">\spydercustomize.py&quot;</span><span style="color:#000;">, line </span><span style="color:#00e600;">668</span><span style="color:#000;">, in </span><span style="color:#ff00ff;">runfile</span></div>
<div class="t" style="left:4px;top:233.27px;font-size:14px;font-family:'Liberation Mono',monospace;letter-spacing:-0.4px;"><span style="color:#000;">    execfile(filename, namespace)</span></div>
<div class="t" style="left:4px;top:263.27px;font-size:14px;font-family:'Liberation Mono',monospace;letter-spacing:-0.4px;"><span style="color:#000;">  File </span><span style="color:#00e600;">&quot;C:\Users\Dora\Anaconda3\lib\site-packages\spyder_kernels\customize</span></div>
<div class="t" style="left:4px;top:278.27px;font-size:14px;font-family:'Liberation Mono',monospace;letter-spacing:-0.4px;"><span style="color:#00e600;">\spydercustomize.py&quot;</span><span style="color:#000;">, line </span><span style="color:#00e600;">108</span><span style="color:#000;">, in </span><span style="color:#ff00ff;">execfile</span></div>
<div class="t" style="left:4px;top:293.27px;font-size:14px;font-family:'Liberation Mono',monospace;letter-spacing:-0.4px;"><span style="color:#000;">    exec(compile(f.read(), filename, &#x27;exec&#x27;), namespace)</span></div>
<div class="t" style="left:4px;top:323.27px;font-size:14px;font-family:'Liberation Mono',monospace;letter-spacing:-0.4px;"><span style="color:#4f86c6;">  File </span><span style="color:#007000;">&quot;C:/Users/Dora/MyFirstProject/MyFile.py&quot;</span><span style="color:#4f86c6;">, line </span><span style="color:#007000;">1</span><span style="color:#4f86c6;">, in </span><span style="color:#9a10d0;">&lt;module&gt;</span></div>
<div class="t" style="left:4px;top:338.27px;font-size:14px;font-family:'Liberation Mono',monospace;letter-spacing:-0.4px;"><span style="color:#8b0000;">    from logbook import Logger, StreamHandler</span></div>
<div class="t" style="left:4px;top:368.27px;font-size:14px;font-family:'Liberation Mono',monospace;letter-spacing:-0.4px;"><span style="color:#8b0000;">ModuleNotFoundError</span><span style="color:#8b0000;">:</span><span style="color:#000;"> No module named &#x27;logbook&#x27;</span></div>
</div>
<div class="a" style="left:1279px;top:420px;width:16px;height:401px;background:#f0f0f0;"></div>
<div class="a" style="left:1280px;top:472px;width:14px;height:152px;box-sizing:border-box;border:1px solid #9a9a9a;border-radius:2px;background:linear-gradient(90deg,#f4f4f4,#dcdcdc);"></div>
<svg class="a" style="left:1283px;top:545px;" width="8" height="6" viewBox="0 0 8 6"><path d="M0 0.5 H8 M0 2.5 H8 M0 4.5 H8" stroke="#707070" stroke-width="1"/></svg>
<svg class="a" style="left:1283px;top:427px;" width="9" height="5" viewBox="0 0 9 5"><path d="M0 5 H9 L4.5 0 Z" fill="#404040"/></svg>
<svg class="a" style="left:1283px;top:810px;" width="9" height="5" viewBox="0 0 9 5"><path d="M0 0 H9 L4.5 5 Z" fill="#404040"/></svg>
<div class="a" style="left:615px;top:822px;width:103px;height:21px;box-sizing:border-box;border:1px solid #8e8f8f;border-top:1px solid #dde6ee;background:#fff;"></div>
<div class="t" style="left:626.40px;top:827.69px;font-size:11px;color:#000;letter-spacing:-0.032px;">IPython console</div>
<div class="a" style="left:717px;top:823px;width:72px;height:18px;box-sizing:border-box;border:1px solid #8e8f8f;border-top:none;background:linear-gradient(#d4d4d4 0,#d8d8d8 45%,#e9e9e9 52%,#ececec 100%);box-shadow:inset 1px -1px 0 #f8f8f8;"></div>
<div class="t" style="left:727.00px;top:826.69px;font-size:11px;color:#000;letter-spacing:-0.087px;">History log</div>
<div class="t" style="left:611.60px;top:848.57px;font-size:11.5px;color:#000;letter-spacing:-0.044px;">Permissions:</div>
<div class="t" style="left:683.40px;top:848.57px;font-size:11.5px;color:#000;font-weight:bold;letter-spacing:1.074px;">RW</div>
<div class="a" style="left:729px;top:845px;width:1px;height:17px;background:#d0d0d0;"></div>
<div class="a" style="left:861px;top:845px;width:1px;height:17px;background:#d0d0d0;"></div>
<div class="a" style="left:1019px;top:845px;width:1px;height:17px;background:#d0d0d0;"></div>
<div class="a" style="left:1162px;top:845px;width:1px;height:17px;background:#d0d0d0;"></div>
<div class="a" style="left:1277px;top:845px;width:1px;height:17px;background:#d0d0d0;"></div>
<div class="t" style="left:734.50px;top:848.57px;font-size:11.5px;color:#000;letter-spacing:0.226px;">End-of-lines:</div>
<div class="t" style="left:808.40px;top:848.57px;font-size:11.5px;color:#000;font-weight:bold;letter-spacing:-0.015px;">CRLF</div>
<div class="t" style="left:866.40px;top:848.57px;font-size:11.5px;color:#000;letter-spacing:0.161px;">Encoding:</div>
<div class="t" style="left:925.80px;top:848.57px;font-size:11.5px;color:#000;font-weight:bold;letter-spacing:0.406px;">ASCII</div>
<div class="t" style="left:1024.10px;top:848.57px;font-size:11.5px;color:#000;letter-spacing:0.052px;">Line:</div>
<div class="t" style="left:1055.30px;top:848.57px;font-size:11.5px;color:#000;font-weight:bold;">8</div>
<div class="t" style="left:1089.20px;top:848.57px;font-size:11.5px;color:#000;letter-spacing:0.511px;">Column:</div>
<div class="t" style="left:1141.40px;top:848.57px;font-size:11.5px;color:#000;font-weight:bold;">1</div>
<div class="t" style="left:1167.20px;top:848.57px;font-size:11.5px;color:#000;letter-spacing:0.539px;">Memory:</div>
<div class="t" style="left:1225.00px;top:848.57px;font-size:11.5px;color:#000;font-weight:bold;letter-spacing:1.804px;">42</div>
<div class="t" style="left:1244.50px;top:848.57px;font-size:11.5px;color:#000;font-weight:bold;">%</div>
<svg class="a" style="left:1284px;top:853px;" width="10" height="8" viewBox="0 0 10 8"><rect x="8" y="0" width="1.6" height="1.6" fill="#a8a8a8"/><rect x="7.2" y="-0.8" width="1" height="1" fill="#fff"/><rect x="5" y="3" width="1.6" height="1.6" fill="#a8a8a8"/><rect x="4.2" y="2.2" width="1" height="1" fill="#fff"/><rect x="8" y="3" width="1.6" height="1.6" fill="#a8a8a8"/><rect x="7.2" y="2.2" width="1" height="1" fill="#fff"/><rect x="2" y="6" width="1.6" height="1.6" fill="#a8a8a8"/><rect x="1.2" y="5.2" width="1" height="1" fill="#fff"/><rect x="5" y="6" width="1.6" height="1.6" fill="#a8a8a8"/><rect x="4.2" y="5.2" width="1" height="1" fill="#fff"/><rect x="8" y="6" width="1.6" height="1.6" fill="#a8a8a8"/><rect x="7.2" y="5.2" width="1" height="1" fill="#fff"/></svg>
</body></html>
